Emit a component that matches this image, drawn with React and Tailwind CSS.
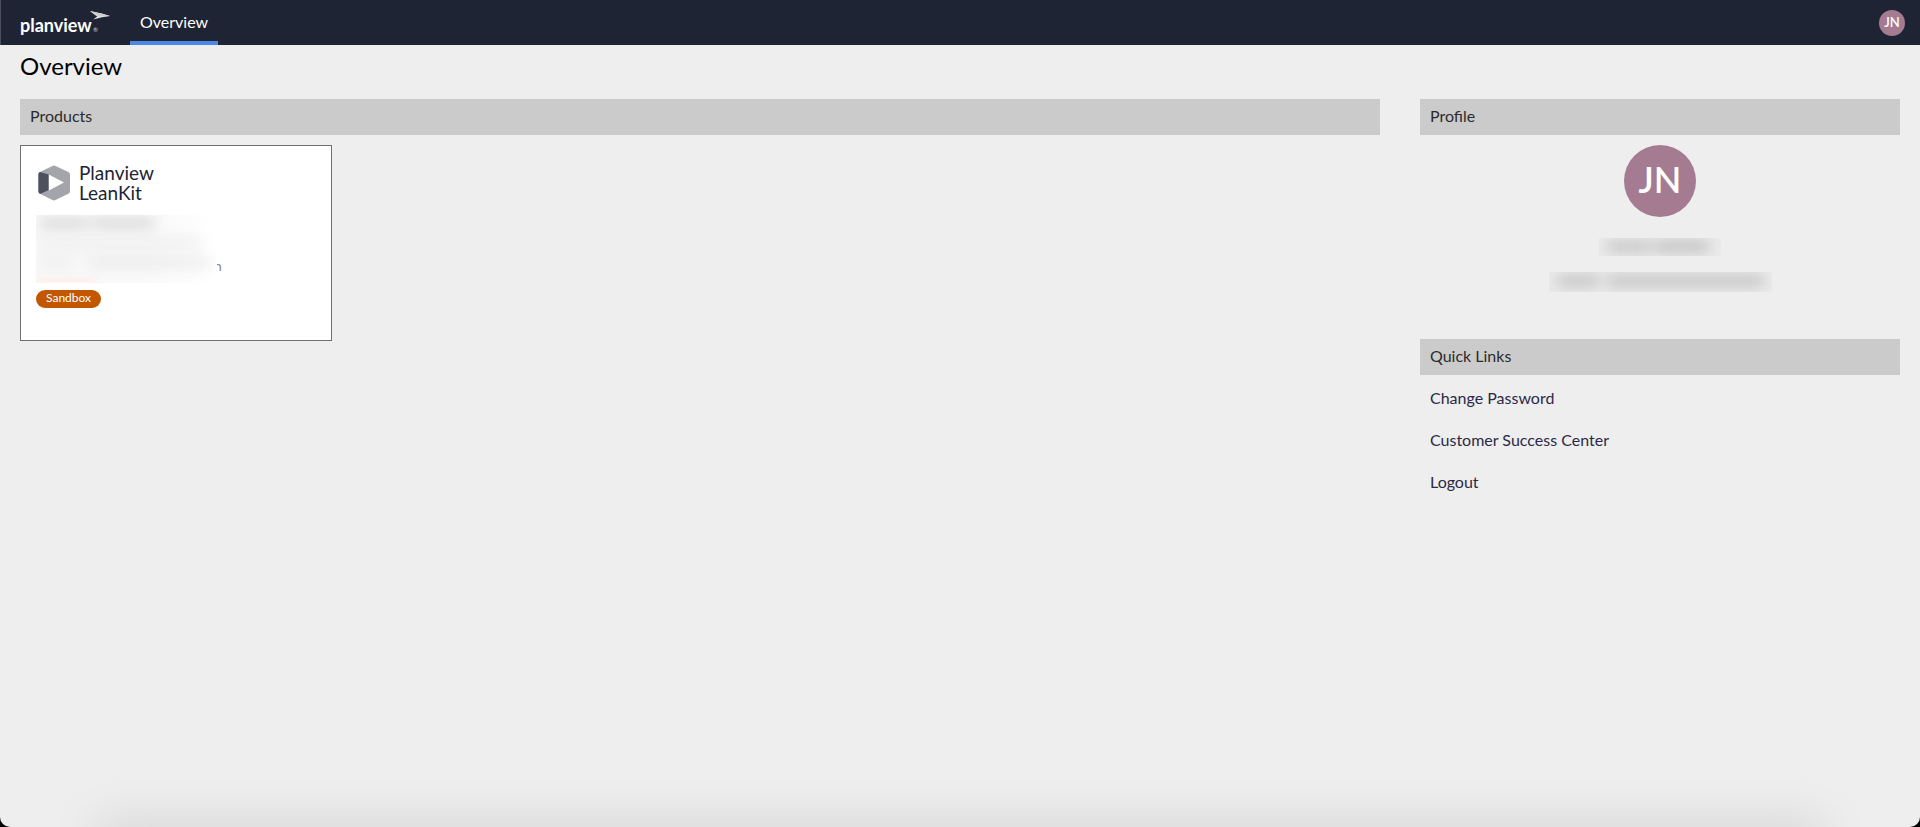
import React from 'react';

const links = ['Change Password', 'Customer Success Center', 'Logout'];

const PlanviewLogo = () => (
    <a href="#" aria-label="planview" className="relative flex h-[45px] w-[90px] items-center text-white">
        <span className="pt-1 font-[Lato,sans-serif] text-[18px] leading-6 font-bold">planview</span>
        <svg className="absolute top-[11px] right-0 h-[16px] w-[20px]" viewBox="0 0 20 16" aria-hidden="true">
            <path d="M0 0 L12.5 2.8 L20 5 L12 6.3 L3.2 8.4 L7.2 5.4 Z" fill="#e3e4e6" />
            <path d="M0 0 L12.5 2.8 L20 5 L7.2 5.4 Z" fill="#cdcfd2" />
        </svg>
        <span className="absolute top-[27px] left-[73px] text-[6px] leading-[6px] text-gray-300">®</span>
    </a>
);

const LeanKitMark = () => (
    <svg className="h-[36px] w-[32px]" viewBox="0 0 32 36" aria-hidden="true">
        <path
            d="M14.4 0.9 Q16 0.1 17.6 0.9 L30.3 6.9 Q32 7.8 32 9.6 V26.2 Q32 28 30.3 28.8 L17.6 35 Q16 35.8 14.4 35 L1.9 28.8 Q0.4 28 0.4 26.2 V9.6 Q0.4 7.8 1.9 6.9 Z"
            fill="#a4a5ab"
        />
        <path d="M0.4 9.6 Q0.4 7.8 1.9 6.9 L10.8 9.4 V25 L2 28.9 Q0.4 28 0.4 26.2 Z" fill="#4d505e" />
        <path d="M10.8 9.4 L26 17.6 L10.8 25.4 Z" fill="#fff" />
    </svg>
);

const Avatar = ({ className }) => (
    <span className={`flex justify-center rounded-full bg-[#a47b91] font-semibold text-white ${className}`}>
        JN
    </span>
);

const SectionTitle = ({ children }) => (
    <h2 className="h-9 bg-[#cbcbcb] px-[10px] text-[16px] leading-[34px] text-[#2b2b2b]">{children}</h2>
);

const ProductCard = () => (
    <article className="h-[196px] w-[312px] border border-[#6f7072] bg-white px-[15px] pt-[17px]">
        <div className="flex items-center gap-[9px] pl-[2px]">
            <LeanKitMark />
            <div className="text-[19px] text-[#1e2433]">
                <p className="leading-5">Planview</p>
                <p className="leading-5">LeanKit</p>
            </div>
        </div>

        {/* Redacted account details */}
        <div className="mt-3 flex items-end">
            <div
                className="relative z-10 flex h-[68px] w-[181px] flex-col gap-[12px] overflow-hidden bg-linear-to-r from-[#f9f9f9] from-60% to-white pt-1"
                aria-hidden="true"
            >
                <div className="ml-1 flex h-[10px] gap-1 blur-[7px]">
                    <div className="w-[48px] bg-[#cecece]" />
                    <div className="w-[62px] bg-[#cecece]" />
                </div>
                <div className="ml-1 h-[10px] w-[160px] bg-[#eaeaea] blur-[7px]" />
                <div className="ml-1 flex h-[10px] gap-4 blur-[7px]">
                    <div className="w-[32px] bg-[#e8e8e8]" />
                    <div className="w-[122px] bg-[#e4e4e4]" />
                </div>
                <div className="h-[6px] w-[60px] bg-[#fdeeea] blur-[3px]" />
            </div>
            <span className="-ml-[3px] pb-[10px] text-[14px] leading-[14px] text-[#8a8a8a]">n</span>
        </div>

        <span className="mt-[7px] inline-block h-[18px] rounded-full bg-[#c25700] px-[10px] align-top text-[12px] leading-4 text-white">
            Sandbox
        </span>
    </article>
);

export default function App() {
    return (
        <div className="bg-black font-[Lato,sans-serif]">
            <div className="relative flex min-h-screen flex-col overflow-hidden rounded-b-[10px] bg-[#eeeeee]">
                <header className="flex h-[45px] items-center border-l border-[#4a4f5b] bg-[#1e2433] pr-[15px] pl-[19px]">
                    <PlanviewLogo />
                    <nav className="ml-5 self-stretch">
                        <a
                            href="#"
                            className="block h-full border-b-4 border-[#4a88e6] px-[10px] text-[16px] leading-[43px] text-white"
                        >
                            Overview
                        </a>
                    </nav>
                    <button type="button" className="ml-auto">
                        <Avatar className="size-[26px] text-[13px] leading-[25px]" />
                    </button>
                </header>

                <main className="px-5">
                    <h1 className="pt-[5px] text-[24px] leading-8 text-black">Overview</h1>

                    <div className="mt-[17px] flex gap-10">
                        <section className="flex-1">
                            <SectionTitle>Products</SectionTitle>
                            <div className="mt-[10px]">
                                <ProductCard />
                            </div>
                        </section>

                        <aside className="w-[480px]">
                            <SectionTitle>Profile</SectionTitle>
                            <div className="flex h-[204px] flex-col items-center pt-[10px]">
                                <Avatar className="size-[72px] text-[36px] leading-[68px]" />
                                {/* Redacted name and email */}
                                <div className="mt-[21px] h-[18px] w-[122px] overflow-hidden bg-[#ebebeb] px-2 py-1" aria-hidden="true">
                                    <div className="flex h-[9px] gap-1 blur-[7px]">
                                        <div className="w-[44px] bg-[#bcbcbc]" />
                                        <div className="w-[54px] bg-[#b6b6b6]" />
                                    </div>
                                </div>
                                <div className="mt-4 h-[20px] w-[223px] overflow-hidden bg-[#ebebeb] px-2 py-1" aria-hidden="true">
                                    <div className="flex h-[10px] gap-2 blur-[7px]">
                                        <div className="w-[42px] bg-[#bebebe]" />
                                        <div className="w-[157px] bg-[#bebebe]" />
                                    </div>
                                </div>
                            </div>

                            <SectionTitle>Quick Links</SectionTitle>
                            <ul className="flex flex-col gap-[18px] px-[10px] pt-[11px]">
                                {links.map((link) => (
                                    <li key={link} className="text-[16px] leading-6 text-[#2b2947]">
                                        <a href="#">{link}</a>
                                    </li>
                                ))}
                            </ul>
                        </aside>
                    </div>
                </main>

                {/* Soft shadow along the bottom edge of the window */}
                <div className="absolute inset-x-[96px] top-full h-5 shadow-[0_0_48px_0_rgba(0,0,0,0.18)]" />
            </div>
        </div>
    );
}
